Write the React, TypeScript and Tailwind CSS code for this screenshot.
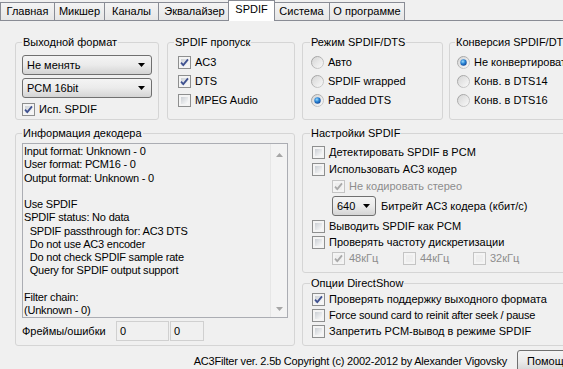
import React, { useId } from "react";

function Check({ checked = false, disabled = false }: { checked?: boolean; disabled?: boolean }) {
  return (
    <span
      className={
        "relative block w-[13px] h-[13px] shrink-0 border p-[2px] bg-[#f4f4f4] " +
        (disabled ? "border-[#c4c4c4]" : "border-[#8e8f8f]")
      }
    >
      <span className={"block w-full h-full " + (disabled ? "bg-[#eeeeee]" : "bg-linear-to-br from-[#cbcfd4] to-[#fbfbfb]")} />
      {checked && (
        <svg className="absolute left-0 top-0" width="11" height="11" viewBox="0 0 11 11">
          <path d="M2 5.6 L4.3 8.1 L9 2.4" fill="none" stroke={disabled ? "#a9a9a9" : "#3f5190"} strokeWidth="1.8" />
        </svg>
      )}
    </span>
  );
}

function Radio({ checked = false }: { checked?: boolean }) {
  const raw = useId();
  const id = "r" + raw.replace(/[^a-zA-Z0-9]/g, "");
  return (
    <svg width="13" height="13" viewBox="0 0 13 13" className="shrink-0">
      <defs>
        <linearGradient id={id + "b"} x1="0" y1="0" x2="1" y2="1">
          <stop offset="0" stopColor="#9a9a9a" />
          <stop offset="1" stopColor="#d2d2d2" />
        </linearGradient>
        <linearGradient id={id + "f"} x1="0" y1="0" x2="1" y2="1">
          <stop offset="0" stopColor="#d4d4d4" />
          <stop offset="1" stopColor="#fbfbfb" />
        </linearGradient>
        <radialGradient id={id + "d"} cx="0.4" cy="0.35" r="0.75">
          <stop offset="0" stopColor="#9fdcfb" />
          <stop offset="0.45" stopColor="#2b86d6" />
          <stop offset="1" stopColor="#0c3a8c" />
        </radialGradient>
      </defs>
      <circle cx="6.5" cy="6.5" r="6" fill={`url(#${id}f)`} stroke={`url(#${id}b)`} />
      {checked && <circle cx="6.5" cy="6.5" r="3.2" fill={`url(#${id}d)`} />}
    </svg>
  );
}

function Arrow() {
  return (
    <svg width="7" height="4" viewBox="0 0 7 4" className="shrink-0">
      <path d="M0 0 H7 L3.5 4 Z" fill="#000" />
    </svg>
  );
}

function CheckRow({
  label,
  checked,
  disabled,
  latin,
}: {
  label: string;
  checked?: boolean;
  disabled?: boolean;
  latin?: boolean;
}) {
  return (
    <div className="flex items-center gap-[4px]">
      <Check checked={checked} disabled={disabled} />
      <span
        className={
          "whitespace-nowrap " + (disabled ? "text-[#8d8d8d] " : "") + (latin ? "tracking-[-0.2px]" : "")
        }
      >
        {label}
      </span>
    </div>
  );
}

function RadioRow({ label, checked }: { label: string; checked?: boolean }) {
  return (
    <div className="flex items-center gap-[4px] h-[19px]">
      <Radio checked={checked} />
      <span className="whitespace-nowrap">{label}</span>
    </div>
  );
}

const tabs = [
  { t: "Главная", cls: "w-[55px]" },
  { t: "Микшер", cls: "w-[51px] -ml-[1px]" },
  { t: "Каналы", cls: "w-[55px] -ml-[1px]" },
  { t: "Эквалайзер", cls: "w-[73px] -ml-[1px]" },
];
const tabs2 = [
  { t: "Система", cls: "w-[57px]" },
  { t: "О программе", cls: "w-[76px] -ml-[1px]" },
];

const infoLines = [
  "Input format: Unknown - 0",
  "User format: PCM16 - 0",
  "Output format: Unknown - 0",
  "",
  "Use SPDIF",
  "SPDIF status: No data",
  "  SPDIF passthrough for: AC3 DTS",
  "  Do not use AC3 encoder",
  "  Do not check SPDIF sample rate",
  "  Query for SPDIF output support",
  "",
  "Filter chain:",
  "(Unknown - 0)",
];

export default function App() {
  return (
    <div className="w-[563px] h-[369px] overflow-hidden bg-[#f0f0f0] text-[11px] leading-[13px] text-black font-['Liberation_Sans',Arial,sans-serif]">
      {/* Tab strip */}
      <div className="flex h-[21px]">
        {tabs.map((x) => (
          <div
            key={x.t}
            className={
              "mt-[2px] h-[19px] shrink-0 border border-[#898c95] bg-linear-to-b from-[#f4f4f4] to-[#e6e6e6] flex items-center justify-center whitespace-nowrap " +
              x.cls
            }
          >
            {x.t}
          </div>
        ))}
        <div className="relative z-10 h-[21px] w-[47px] shrink-0 -ml-[3px] -mr-[2px] border border-b-0 border-[#898c95] bg-white flex justify-center pt-[2px]">
          SPDIF
        </div>
        {tabs2.map((x) => (
          <div
            key={x.t}
            className={
              "mt-[2px] h-[19px] shrink-0 border border-[#898c95] bg-linear-to-b from-[#f4f4f4] to-[#e6e6e6] flex items-center justify-center whitespace-nowrap " +
              x.cls
            }
          >
            {x.t}
          </div>
        ))}
        <div className="flex-1 h-full border-b border-[#898c95]" />
      </div>

      {/* Content */}
      <div className="grid grid-cols-[280px_276px] grid-rows-[84px_219px] gap-x-[7px] gap-y-[7px] pl-[15px] pt-[15px]">
        {/* Top left */}
        <div className="flex gap-[8px]">
          <fieldset className="w-[144px] h-[84px] shrink-0 border border-[#d5d5d5] rounded-[3px]">
            <legend className="ml-[6px] px-[1px] leading-[13px]">Выходной формат</legend>
            <div className="px-[6px]">
              <div className="mt-[6px] h-[20px] flex items-center justify-between rounded-[3px] border border-[#707070] bg-linear-to-b from-[#f4f4f4] via-[#ebebeb] to-[#d4d4d4] pl-[4px] pr-[6px]">
                <span>Не менять</span>
                <Arrow />
              </div>
              <div className="mt-[3px] h-[20px] flex items-center justify-between rounded-[3px] border border-[#707070] bg-linear-to-b from-[#f4f4f4] via-[#ebebeb] to-[#d4d4d4] pl-[4px] pr-[6px]">
                <span>PCM 16bit</span>
                <Arrow />
              </div>
              <div className="mt-[4px] h-[15px] flex items-center">
                <CheckRow label="Исп. SPDIF" checked />
              </div>
            </div>
          </fieldset>
          <fieldset className="w-[128px] h-[84px] shrink-0 border border-[#d5d5d5] rounded-[3px]">
            <legend className="ml-[6px] px-[1px] leading-[13px]">SPDIF пропуск</legend>
            <div className="pl-[10px] pt-[4px]">
              <div className="h-[19px] flex items-center">
                <CheckRow label="AC3" checked />
              </div>
              <div className="h-[19px] flex items-center">
                <CheckRow label="DTS" checked />
              </div>
              <div className="h-[19px] flex items-center">
                <CheckRow label="MPEG Audio" />
              </div>
            </div>
          </fieldset>
        </div>

        {/* Top right */}
        <div className="flex gap-[6px]">
          <fieldset className="w-[141px] h-[84px] shrink-0 border border-[#d5d5d5] rounded-[3px]">
            <legend className="ml-[7px] px-[1px] leading-[13px]">Режим SPDIF/DTS</legend>
            <div className="pl-[8px] pt-[4px]">
              <RadioRow label="Авто" />
              <RadioRow label="SPDIF wrapped" />
              <RadioRow label="Padded DTS" checked />
            </div>
          </fieldset>
          <fieldset className="w-[140px] h-[84px] shrink-0 border border-[#d5d5d5] rounded-[3px]">
            <legend className="ml-[5px] px-[1px] leading-[13px] whitespace-nowrap">Конверсия SPDIF/DTS</legend>
            <div className="pl-[7px] pt-[4px]">
              <RadioRow label="Не конвертировать" checked />
              <RadioRow label="Конв. в DTS14" />
              <RadioRow label="Конв. в DTS16" />
            </div>
          </fieldset>
        </div>

        {/* Decoder info */}
        <fieldset className="w-[280px] h-[219px] border border-[#d5d5d5] rounded-[3px]">
          <legend className="ml-[6px] px-[1px] leading-[13px]">Информация декодера</legend>
          <div className="pl-[6px]">
            <div className="mt-[3px] w-[266px] h-[175px] border border-[#abadb3] bg-[#f0f0f0] flex">
              <div className="flex-1 pl-[1px] pt-[1px] leading-[13.25px] whitespace-pre tracking-[-0.2px]">
                {infoLines.map((l, i) => (
                  <div key={i} className="h-[13.25px]">
                    {l}
                  </div>
                ))}
              </div>
              <div className="w-[17px] shrink-0 border-l border-[#e6e6e6] bg-[#f3f3f3] flex flex-col items-center justify-between pt-[9px] pb-[6px]">
                <svg width="7" height="4" viewBox="0 0 7 4">
                  <path d="M0 4 H7 L3.5 0 Z" fill="#a6a6a6" />
                </svg>
                <svg width="7" height="4" viewBox="0 0 7 4">
                  <path d="M0 0 H7 L3.5 4 Z" fill="#a6a6a6" />
                </svg>
              </div>
            </div>
            <div className="mt-[3px] h-[20px] flex items-center">
              <span className="w-[94px] shrink-0 whitespace-nowrap">Фреймы/ошибки</span>
              <div className="w-[53px] h-[20px] border border-[#d0d0d0] bg-[#f0f0f0] pl-[3px] flex items-center">0</div>
              <div className="ml-[1px] w-[34px] h-[20px] border border-[#d0d0d0] bg-[#f0f0f0] pl-[3px] flex items-center">0</div>
            </div>
          </div>
        </fieldset>

        {/* Right column */}
        <div className="flex flex-col gap-[4px]">
          <fieldset className="w-[276px] h-[146px] shrink-0 border border-[#d5d5d5] rounded-[3px]">
            <legend className="ml-[7px] px-[1px] leading-[13px]">Настройки SPDIF</legend>
            <div className="pl-[9px] pt-[4px]">
              <div className="h-[17px] flex items-center">
                <CheckRow label="Детектировать SPDIF в PCM" />
              </div>
              <div className="h-[17px] flex items-center">
                <CheckRow label="Использовать AC3 кодер" />
              </div>
              <div className="h-[17px] flex items-center pl-[20px]">
                <CheckRow label="Не кодировать стерео" checked disabled />
              </div>
              <div className="mt-[1px] h-[20px] flex items-center pl-[20px] gap-[5px]">
                <div className="w-[44px] h-[20px] flex items-center justify-between rounded-[3px] border border-[#707070] bg-linear-to-b from-[#f4f4f4] via-[#ebebeb] to-[#d4d4d4] pl-[4px] pr-[5px]">
                  <span>640</span>
                  <Arrow />
                </div>
                <span className="whitespace-nowrap">Битрейт AC3 кодера (кбит/с)</span>
              </div>
              <div className="mt-[2px] h-[16px] flex items-center">
                <CheckRow label="Выводить SPDIF как PCM" />
              </div>
              <div className="h-[16px] flex items-center">
                <CheckRow label="Проверять частоту дискретизации" />
              </div>
              <div className="h-[16px] flex items-center pl-[20px]">
                <div className="w-[71px]">
                  <CheckRow label="48кГц" checked disabled />
                </div>
                <div className="w-[70px]">
                  <CheckRow label="44кГц" disabled />
                </div>
                <div>
                  <CheckRow label="32кГц" disabled />
                </div>
              </div>
            </div>
          </fieldset>
          <fieldset className="w-[276px] h-[69px] shrink-0 border border-[#d5d5d5] rounded-[3px]">
            <legend className="ml-[7px] px-[1px] leading-[13px]">Опции DirectShow</legend>
            <div className="pl-[9px] pt-[1px]">
              <div className="h-[16px] flex items-center">
                <CheckRow label="Проверять поддержку выходного формата" checked />
              </div>
              <div className="h-[16px] flex items-center">
                <CheckRow label="Force sound card to reinit after seek / pause" latin />
              </div>
              <div className="h-[16px] flex items-center">
                <CheckRow label="Запретить PCM-вывод в режиме SPDIF" />
              </div>
            </div>
          </fieldset>
        </div>
      </div>

      {/* Bottom row */}
      <div className="mt-[4px] h-[23px] flex items-center justify-end">
        <span className="mr-[10px] whitespace-nowrap tracking-[-0.2px]">
          AC3Filter ver. 2.5b Copyright (c) 2002-2012 by Alexander Vigovsky
        </span>
        <div className="w-[75px] h-[23px] -mr-[29px] shrink-0 rounded-[3px] border border-[#707070] bg-linear-to-b from-[#f4f4f4] via-[#ebebeb] to-[#d2d2d2] flex items-center pl-[9px]">
          Помощь
        </div>
      </div>
    </div>
  );
}
